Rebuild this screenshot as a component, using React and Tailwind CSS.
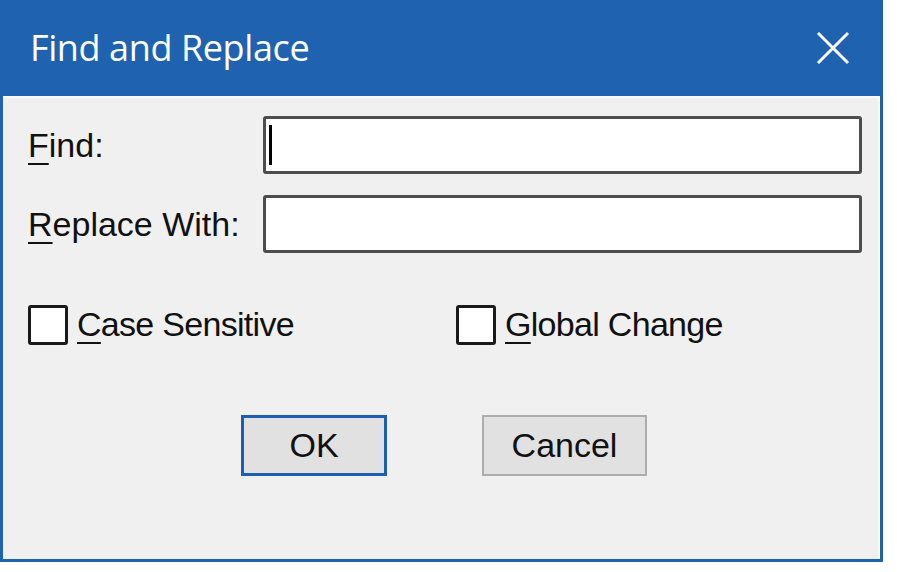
import React from "react";

const Mnemonic = ({ children }) => (
  <span className="underline decoration-2 underline-offset-[6px]">{children}</span>
);

const TextBox = ({ caret }) => (
  <div className="flex-1 h-[58px] bg-white border-[3px] border-[#4d4d4d] rounded-[3px] flex items-center pl-[3px]">
    {caret && <span className="w-[3px] h-[40px] bg-black" />}
  </div>
);

const CheckBox = ({ first, rest }) => (
  <div className="flex items-center gap-[9px]">
    <div className="w-[40px] h-[40px] bg-white border-[3px] border-[#1a1a1a] rounded-[3px]" />
    <span className="tracking-[-0.7px]">
      <Mnemonic>{first}</Mnemonic>
      {rest}
    </span>
  </div>
);

const App = () => {
  return (
    <div className="w-[897px] h-[572px] bg-white">
      <div className="w-[883px] h-[562px] bg-[#1e62b0] px-[3px] pb-[3px] flex flex-col">
        {/* title bar */}
        <div className="h-[96px] flex items-center justify-between pl-[27px] pr-[30px] shrink-0">
          <span
            className="text-white text-[36px] tracking-[-0.4px]"
            style={{ fontFamily: '"Open Sans", "Noto Sans", sans-serif' }}
          >
            Find and Replace
          </span>
          <svg width="34" height="34" viewBox="0 0 34 34" fill="none">
            <path d="M2 2 L32 32 M32 2 L2 32" stroke="white" strokeWidth="3" />
          </svg>
        </div>

        {/* body */}
        <div
          className="flex-1 bg-[#f0f0f0] border-t-2 border-r-2 border-[#fafafa] pl-[25px] pr-[16px] pt-[18px] text-[34px] text-[#111]"
          style={{ fontFamily: '"Liberation Sans", Arial, sans-serif' }}
        >
          <div className="flex flex-col gap-[21px]">
            <div className="flex items-center">
              <span className="w-[235px]">
                <Mnemonic>F</Mnemonic>ind:
              </span>
              <TextBox caret />
            </div>
            <div className="flex items-center">
              <span className="w-[235px]">
                <Mnemonic>R</Mnemonic>eplace With:
              </span>
              <TextBox />
            </div>
          </div>

          <div className="flex items-center mt-[46px]">
            <div className="w-[428px]">
              <CheckBox first="C" rest="ase Sensitive" />
            </div>
            <CheckBox first="G" rest="lobal Change" />
          </div>

          <div className="flex items-center gap-[95px] mt-[65px] pl-[213px]">
            <button className="w-[146px] h-[61px] bg-[#e1e1e1] border-[3px] border-[#1a5fb4] flex items-center justify-center">
              OK
            </button>
            <button className="w-[165px] h-[61px] bg-[#e1e1e1] border-2 border-[#adadad] flex items-center justify-center">
              Cancel
            </button>
          </div>
        </div>
      </div>
    </div>
  );
};

export default App;
